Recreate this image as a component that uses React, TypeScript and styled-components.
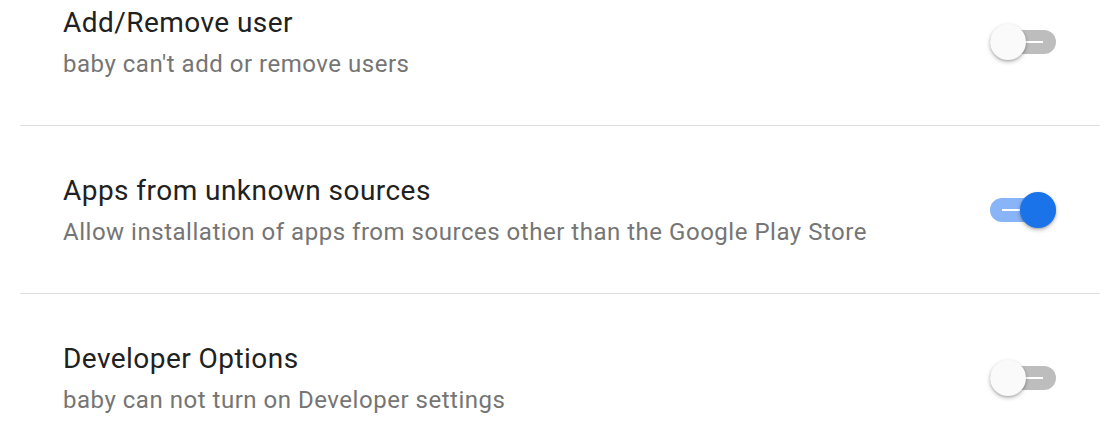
import { ReactElement, useState } from 'react'
import styled, { createGlobalStyle } from 'styled-components'

const GlobalStyle = createGlobalStyle`
  html, body {
    margin: 0;
    padding: 0;
    background: #ffffff;
    font-family: Roboto, 'Noto Sans', Arial, sans-serif;
    overflow: hidden;
  }
`

const SettingsList = styled.div`
  margin: -42px 13px 0 20px;
  display: flex;
  flex-direction: column;
`

const SettingRow = styled.div`
  height: 167px;
  display: flex;
  align-items: center;
  justify-content: space-between;
  padding: 0 44px 0 43px;
  border-bottom: 1px solid #e0e0e0;

  &:last-child {
    border-bottom: none;
  }
`

const TextBlock = styled.div`
  display: flex;
  flex-direction: column;
  gap: 9px;
  padding-top: 1px;
`

const Title = styled.div`
  font-size: 28px;
  line-height: 34px;
  letter-spacing: 0.45px;
  color: #212121;
`

const Subtitle = styled.div`
  font-size: 24px;
  line-height: 30px;
  letter-spacing: 0.52px;
  color: #757575;
`

const Track = styled.button<{ $on: boolean }>`
  position: relative;
  width: 66px;
  height: 24px;
  border: none;
  padding: 0;
  border-radius: 12px;
  cursor: pointer;
  background: ${({ $on }) => ($on ? '#8ab4f8' : '#bdbdbd')};
  flex-shrink: 0;
`

const Mark = styled.span<{ $on: boolean }>`
  position: absolute;
  top: 11px;
  left: ${({ $on }) => ($on ? '12px' : '35px')};
  width: 18px;
  height: 2px;
  background: #ffffff;
`

const Thumb = styled.span<{ $on: boolean }>`
  position: absolute;
  top: -6px;
  left: ${({ $on }) => ($on ? '30px' : '0')};
  width: 36px;
  height: 36px;
  border-radius: 50%;
  background: ${({ $on }) => ($on ? '#1a73e8' : '#fafafa')};
  box-shadow: 0 2px 4px rgba(0, 0, 0, 0.25), 0 1px 2px rgba(0, 0, 0, 0.15);
  transition: left 0.15s ease;
`

type Setting = {
  title: string
  subtitle: string
  on: boolean
}

const SETTINGS: Setting[] = [
  { title: 'Add/Remove user', subtitle: "baby can't add or remove users", on: false },
  {
    title: 'Apps from unknown sources',
    subtitle: 'Allow installation of apps from sources other than the Google Play Store',
    on: true,
  },
  { title: 'Developer Options', subtitle: 'baby can not turn on Developer settings', on: false },
]

const Toggle = ({ on, onClick }: { on: boolean; onClick: () => void }): ReactElement => (
  <Track $on={on} onClick={onClick} aria-pressed={on}>
    <Mark $on={on} />
    <Thumb $on={on} />
  </Track>
)

const App = (): ReactElement => {
  const [values, setValues] = useState(SETTINGS.map((s) => s.on))

  return (
    <>
      <GlobalStyle />
      <SettingsList>
        {SETTINGS.map((s, i) => (
          <SettingRow key={s.title}>
            <TextBlock>
              <Title>{s.title}</Title>
              <Subtitle>{s.subtitle}</Subtitle>
            </TextBlock>
            <Toggle
              on={values[i]}
              onClick={() => setValues((v) => v.map((x, j) => (j === i ? !x : x)))}
            />
          </SettingRow>
        ))}
      </SettingsList>
    </>
  )
}

export default App
